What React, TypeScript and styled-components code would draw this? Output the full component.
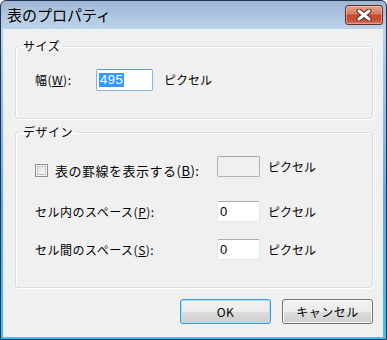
import styled, { createGlobalStyle } from "styled-components"

const GlobalStyle = createGlobalStyle`
  html, body {
    margin: 0;
    padding: 0;
    background: #ffffff;
  }
  body {
    font-family: "Noto Sans CJK JP", "Liberation Sans", sans-serif;
    color: #000;
  }
`

const CloseIcon = () => (
  <svg width="16" height="12" viewBox="0 0 16 12">
    <path d="M3 2 L13 10 M13 2 L3 10" stroke="#5a2418" strokeWidth="5" strokeLinecap="round" />
    <path d="M3 2 L13 10 M13 2 L3 10" stroke="#ffffff" strokeWidth="3" strokeLinecap="round" />
  </svg>
)

const App = () => {
  return (
    <>
      <GlobalStyle />
      <Window>
        <TitleBar>
          <Title>表のプロパティ</Title>
          <CloseButton>
            <CloseIcon />
          </CloseButton>
        </TitleBar>
        <Client>
          <Group>
            <Legend>サイズ</Legend>
            <Row>
              <Label $width={61}>
                幅(<Key>W</Key>):
              </Label>
              <TextBox $width={57} $height={22} $focused>
                <Selected>495</Selected>
              </TextBox>
              <Unit $gap={11}>ピクセル</Unit>
            </Row>
          </Group>

          <Group $top={6}>
            <Legend>デザイン</Legend>
            <Rows>
              <Row $after={23}>
                <CheckLabel>
                  <CheckBox />
                  <span>
                    表の罫線を表示する(<Key>B</Key>):
                  </span>
                </CheckLabel>
                <TextBox $width={43} $height={21} $disabled />
                <Unit $gap={8}>ピクセル</Unit>
              </Row>
              <Row $after={17}>
                <Label $width={182}>
                  セル内のスペース(<Key>P</Key>):
                </Label>
                <TextBox $width={43} $height={21}>0</TextBox>
                <Unit $gap={8}>ピクセル</Unit>
              </Row>
              <Row>
                <Label $width={182}>
                  セル間のスペース(<Key>S</Key>):
                </Label>
                <TextBox $width={43} $height={21}>0</TextBox>
                <Unit $gap={8}>ピクセル</Unit>
              </Row>
            </Rows>
          </Group>

          <ButtonBar>
            <Button $default>OK</Button>
            <Button>キャンセル</Button>
          </ButtonBar>
        </Client>
      </Window>
    </>
  )
}

const Window = styled.div`
  box-sizing: border-box;
  width: 387px;
  height: 340px;
  border: 1px solid #22334d;
  border-radius: 6px 6px 0 0;
  background: linear-gradient(
    to bottom,
    #9db6d3 0px,
    #bbd3eb 28px,
    #a4c8ec 60px,
    #62aae6 200px,
    #38c3f1 100%
  );
  display: flex;
  flex-direction: column;
  overflow: hidden;
`

const TitleBar = styled.div`
  height: 28px;
  flex: none;
  display: flex;
  align-items: center;
  justify-content: space-between;
  padding: 0 3px 0 6px;
`

const Title = styled.div`
  font-size: 15px;
  line-height: 18px;
  color: #000;
  text-shadow: 0 0 6px rgba(255, 255, 255, 0.6);
`

const CloseButton = styled.div`
  box-sizing: border-box;
  width: 38px;
  height: 20px;
  border: 1px solid #6a2b20;
  border-radius: 3px;
  background: linear-gradient(
    to bottom,
    #e6a590 0%,
    #d77a62 45%,
    #c5482c 50%,
    #c65437 80%,
    #d8785c 100%
  );
  box-shadow: inset 0 0 0 1px rgba(255, 220, 205, 0.45);
  display: grid;
  place-items: center;
`

const Client = styled.div`
  flex: 1;
  margin: 0 3px 2px 2px;
  padding: 10px 10px 0 12px;
  background: #f0f0f0;
  box-shadow: inset 1px 0 0 #e3ecf5;
  display: flex;
  flex-direction: column;
`

const Group = styled.fieldset<{ $top?: number }>`
  margin: ${(p) => p.$top ?? 0}px 0 0 0;
  padding: 16px 0 27px 19px;
  min-width: 0;
  border: 1px solid #d5dfe5;
  border-radius: 3px;
  box-shadow: inset 1px 1px 0 #ffffff, 1px 1px 0 #ffffff;
`

const Legend = styled.legend`
  margin-left: -15px;
  padding: 0 3px;
  font-size: 12px;
  line-height: 14px;
  letter-spacing: 0.5px;
`

const Rows = styled.div`
  display: flex;
  flex-direction: column;
`

const Row = styled.div<{ $after?: number }>`
  display: flex;
  align-items: center;
  margin-bottom: ${(p) => p.$after ?? 0}px;
`

const Label = styled.div<{ $width: number }>`
  width: ${(p) => p.$width}px;
  flex: none;
  font-size: 12px;
  line-height: 14px;
  letter-spacing: 0.5px;
  white-space: nowrap;
`

const CheckLabel = styled.div`
  width: 182px;
  flex: none;
  display: flex;
  align-items: center;
  gap: 7px;
  font-size: 13px;
  line-height: 15px;
  letter-spacing: 0.5px;
  white-space: nowrap;
  margin-top: 8px;
`

const CheckBox = styled.div`
  box-sizing: border-box;
  width: 13px;
  height: 13px;
  flex: none;
  border: 1px solid #8e8f8f;
  background: linear-gradient(135deg, #dcdcdc 0%, #f0f0f0 60%, #fbfbfb 100%);
  box-shadow: inset 0 0 0 1px #f4f4f4, inset 0 0 0 2px #c9c9c9;
`

const Key = styled.span`
  text-decoration: underline;
  text-underline-offset: 1px;
`

const TextBox = styled.div<{
  $width: number
  $height: number
  $focused?: boolean
  $disabled?: boolean
}>`
  box-sizing: border-box;
  width: ${(p) => p.$width}px;
  height: ${(p) => p.$height}px;
  flex: none;
  padding: 0 2px;
  display: flex;
  align-items: center;
  font-family: "Liberation Sans", Arial, sans-serif;
  font-size: 13px;
  background: ${(p) => (p.$disabled ? "#f0f0f0" : "#ffffff")};
  border: 1px solid
    ${(p) => (p.$focused ? "#8ab5df" : p.$disabled ? "#b0b4b7" : "#e2e7ec")};
  border-top-color: ${(p) =>
    p.$focused ? "#5d9ad4" : p.$disabled ? "#a5a9ad" : "#abadb3"};
  border-radius: 2px;
`

const Selected = styled.span`
  background: #3399ff;
  color: #ffffff;
  padding: 0 1px;
  line-height: 14px;
  letter-spacing: 0.5px;
`

const Unit = styled.div<{ $gap: number }>`
  margin-left: ${(p) => p.$gap}px;
  font-size: 12px;
  line-height: 14px;
  white-space: nowrap;
`

const ButtonBar = styled.div`
  margin-top: 11px;
  display: flex;
  justify-content: flex-end;
  gap: 11px;
`

const Button = styled.div<{ $default?: boolean }>`
  box-sizing: border-box;
  width: 91px;
  height: 25px;
  display: grid;
  place-items: center;
  font-size: 12px;
  letter-spacing: 0.5px;
  border: 1px solid ${(p) => (p.$default ? "#3c98d6" : "#707070")};
  border-radius: 3px;
  background: linear-gradient(
    to bottom,
    #f2f2f2 0%,
    #ebebeb 50%,
    #dddddd 51%,
    #cfcfcf 100%
  );
  box-shadow: inset 0 0 0 1px
    ${(p) => (p.$default ? "#a9e2f8" : "#fcfcfc")};
`

export default App
